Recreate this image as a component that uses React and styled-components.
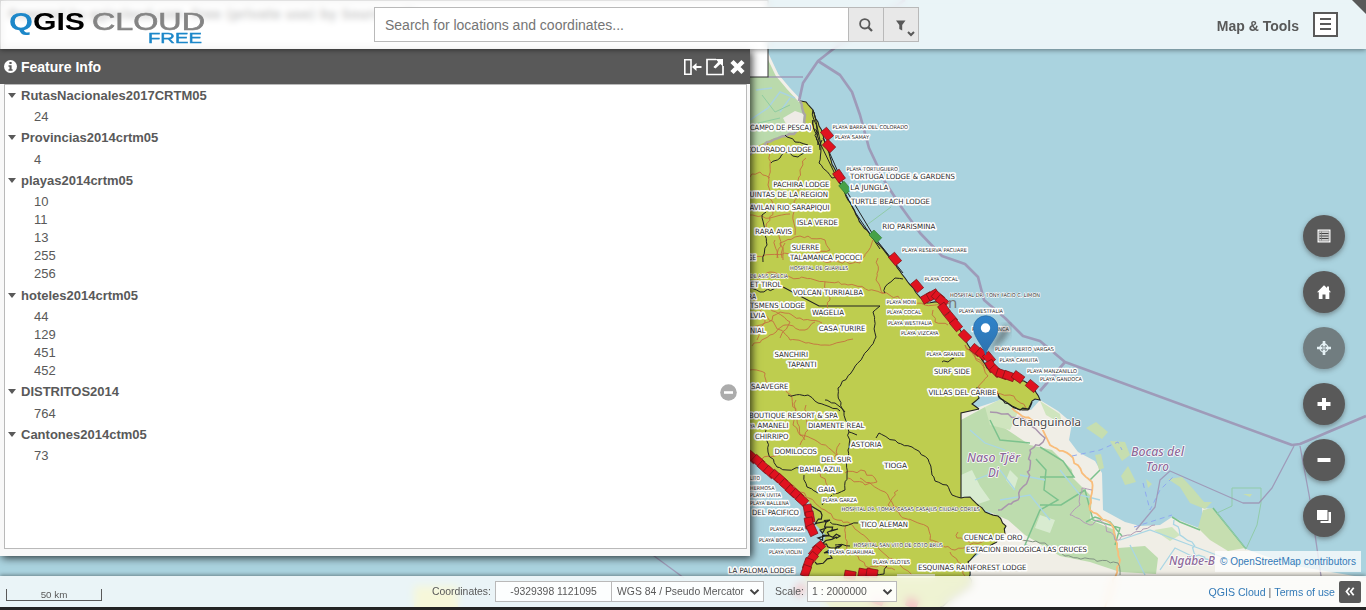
import React from 'react';
import styled, { createGlobalStyle } from 'styled-components';

const Global = createGlobalStyle`
  * { box-sizing: border-box; }
  body { margin: 0; overflow: hidden; background: #262626; font-family: "Liberation Sans", Arial, sans-serif; color: #595959; }
`;

const Screen = styled.div`
  position: relative;
  width: 1366px;
  height: 610px;
  overflow: hidden;
  display: flex;
  flex-direction: column;
  background: #262626;
`;
const MapCanvas = styled.svg`
  position: absolute;
  inset: 0 0 3px 0;
  width: 1366px;
  height: 607px;
  display: block;
`;
const Header = styled.header`
  position: relative;
  z-index: 3;
  height: 49px;
  flex: none;
  display: flex;
  align-items: center;
  background: rgba(255, 255, 255, 0.75);
  backdrop-filter: blur(3px);
  box-shadow: 0 1px 5px rgba(0, 0, 0, 0.45);
`;
const Logo = styled.svg`
  width: 374px;
  height: 49px;
  flex: none;
`;
const SearchBox = styled.div`
  display: flex;
  width: 545px;
  height: 35px;
  border: 1px solid #b9b9b9;
  background: #fff;
`;
const SearchText = styled.div`
  flex: 1;
  padding-left: 10px;
  font-size: 14px;
  line-height: 35px;
  color: #757575;
`;
const SearchButton = styled.div`
  width: 35px;
  border-left: 1px solid #b9b9b9;
  background: #e8e8e8;
  display: flex;
  align-items: center;
  justify-content: center;
`;
const MenuArea = styled.div`
  margin-left: auto;
  margin-right: 28px;
  display: flex;
  align-items: center;
  gap: 14px;
  font-size: 14px;
  font-weight: bold;
  padding-top: 3px;
`;
const MenuButton = styled.div`
  width: 25px;
  height: 25px;
  border: 2px solid #595959;
  background: #fff;
  display: flex;
  flex-direction: column;
  align-items: center;
  justify-content: center;
  gap: 3px;
  margin-top: -4px;
`;
const MenuBar = styled.i`
  width: 11px;
  height: 2px;
  background: #595959;
`;
const Corner = styled.i`
  position: absolute;
  top: 0;
  right: 0;
  border-top: 14px solid #595959;
  border-left: 14px solid transparent;
`;
const Main = styled.main`
  position: relative;
  z-index: 2;
  height: 527px;
  flex: none;
  display: flex;
  justify-content: space-between;
  align-items: flex-start;
`;
const InfoWindow = styled.section`
  width: 750px;
  height: 507px;
  background: #f8f8f8;
  box-shadow: 2px 2px 8px rgba(0, 0, 0, 0.75);
  display: flex;
  flex-direction: column;
  padding-bottom: 7px;
`;
const TitleBar = styled.div`
  height: 35px;
  flex: none;
  display: flex;
  align-items: center;
  gap: 4px;
  padding: 0 3px 0 4px;
  background: #595959;
  color: #fff;
  font-size: 14px;
  font-weight: bold;
`;
const TitleTools = styled.div`
  margin-left: auto;
  display: flex;
  align-items: center;
  gap: 4px;
`;
const Tree = styled.div`
  position: relative;
  flex: 1;
  margin: 0 3px 0 4px;
  padding-top: 1px;
  border: 1px solid #b9b9b9;
  background: #fff;
  font-size: 13px;
`;
const Group = styled.div`
  padding-bottom: 2.7px;
`;
const GroupTitle = styled.div`
  display: flex;
  align-items: center;
  height: 18px;
  margin-bottom: 4px;
  font-weight: bold;
  gap: 5px;
  padding-left: 3px;
`;
const Arrow = styled.i`
  border: 4px solid transparent;
  border-top: 5px solid #595959;
  border-bottom: 0;
`;
const Feature = styled.div`
  height: 18px;
  line-height: 18px;
  padding-left: 29px;
`;
const RemoveBadge = styled.svg`
  position: absolute;
  right: 9px;
  top: 299px;
`;
const Side = styled.aside`
  height: 527px;
  display: flex;
  flex-direction: column;
  align-items: flex-end;
  padding-top: 166px;
`;
const Tools = styled.div`
  display: flex;
  flex-direction: column;
  gap: 14px;
  padding-right: 21px;
`;
const RoundButton = styled.div`
  width: 42px;
  height: 42px;
  border-radius: 50%;
  background: #595959;
  opacity: ${(p) => (p.$off ? 0.7 : 1)};
  box-shadow: 0 2px 5px rgba(60, 60, 60, 0.5);
  display: flex;
  align-items: center;
  justify-content: center;
`;
const Attribution = styled.div`
  margin: auto 5px 4px 0;
  width: 146px;
  height: 21px;
  line-height: 21px;
  text-align: center;
  white-space: nowrap;
  font-size: 10px;
  color: #337ab7;
  background: rgba(255, 255, 255, 0.75);
`;
const Footer = styled.footer`
  position: relative;
  z-index: 3;
  height: 31px;
  flex: none;
  display: flex;
  align-items: center;
  font-size: 10.4px;
  background: rgba(255, 255, 255, 0.75);
  backdrop-filter: blur(4px);
  box-shadow: 0 -1px 4px rgba(0, 0, 0, 0.4);
`;
const ScaleBar = styled.div`
  width: 96px;
  height: 12px;
  margin: 7px 0 0 6px;
  border: 1px solid #595959;
  border-top: 0;
  font-size: 9.8px;
  line-height: 12px;
  text-align: center;
`;
const FooterFields = styled.div`
  display: flex;
  align-items: center;
  margin-left: 330px;
`;
const FieldLabel = styled.span`
  width: ${(p) => p.$w}px;
  margin-left: ${(p) => p.$gap || 0}px;
`;
const Field = styled.div`
  width: ${(p) => p.$w}px;
  height: 21px;
  border: 1px solid #b9b9b9;
  margin-left: ${(p) => (p.$joined ? -1 : 0)}px;
  background: rgba(255, 255, 255, 0.85);
  display: flex;
  align-items: center;
  justify-content: ${(p) => (p.$center ? 'center' : 'space-between')};
  padding: 0 3px 0 ${(p) => (p.$center ? 3 : p.$pad || 5)}px;
  white-space: nowrap;
  font-size: ${(p) => p.$size || 10.4}px;
`;
const Links = styled.div`
  margin-left: auto;
  margin-right: 5px;
  display: flex;
  align-items: center;
  gap: 3px;
  font-size: 10.6px;
`;
const Link = styled.span`
  color: #337ab7;
`;
const Collapse = styled.div`
  width: 22px;
  height: 22px;
  margin-left: 1px;
  border-radius: 2px;
  background: #595959;
  display: flex;
  align-items: center;
  justify-content: center;
`;

const GROUPS = [
  ['RutasNacionales2017CRTM05', ['24']],
  ['Provincias2014crtm05', ['4']],
  ['playas2014crtm05', ['10', '11', '13', '255', '256']],
  ['hoteles2014crtm05', ['44', '129', '451', '452']],
  ['DISTRITOS2014', ['764']],
  ['Cantones2014ctm05', ['73']],
];

// [text, left, right, baseline]
const HOTELS = [
  ['CAMPO DE PESCA)', 750, 811.5, 129.7], ['COLORADO LODGE', 746, 812, 152.3], ['PACHIRA LODGE', 773.3, 829.5, 187],
  ['QUINTAS DE LA REGION', 744, 828, 197], ['GAVILAN RIO SARAPIQUI', 744, 829.5, 210.3], ['ISLA VERDE', 797, 838, 225.3],
  ['RARA AVIS', 755, 792, 233.7], ['SUERRE', 791.7, 819.5, 250], ['TALAMANCA POCOCI', 790, 862, 260],
  ['TORTUGA LODGE & GARDENS', 850, 955, 179], ['LA JUNGLA', 850.3, 888.3, 190], ['TURTLE BEACH LODGE', 851, 930, 204.3],
  ['RIO PARISMINA', 882.3, 935.3, 229], ['ET TIROL', 750, 781.5, 287], ['VOLCAN TURRIALBA', 793, 863, 295],
  ['TSMENS LODGE', 750, 805, 308.3], ['WAGELIA', 812, 844, 315], ['LVIA', 750, 765.5, 318], ['CASA TURIRE', 818.7, 865.5, 330.5],
  ['NIAL', 750, 765.5, 333], ['SANCHIRI', 774.5, 808, 357], ['TAPANTI', 787.5, 816.5, 367], ['SAAVEGRE', 751, 788.5, 388.5],
  ['SURF SIDE', 934, 970, 373.5], ['VILLAS DEL CARIBE', 928.5, 996.5, 394.5], ['BOUTIQUE RESORT & SPA', 749, 837.7, 417.5],
  ['AMANELI', 757.5, 788.5, 428], ['CHIRRIPO', 755, 788.5, 439], ['DIAMENTE REAL', 808, 864.5, 427.7],
  ['DOMILOCOS', 774.5, 817, 453.7], ['ASTORIA', 851, 881.5, 447], ['DEL SUR', 821, 851.5, 462], ['BAHIA AZUL', 799.5, 842, 472],
  ['TIOGA', 884, 907, 468], ['GAIA', 818, 835, 492], ['TICO ALEMAN', 860.5, 908, 527], ['CUENCA DE ORO', 964, 1022.5, 540],
  ['ESTACION BIOLOGICA LAS CRUCES', 966, 1087, 552], ['ESQUINAS RAINFOREST LODGE', 918, 1026.5, 570],
  ['DEL PACIFICO', 752, 799, 515], ['LA PALOMA LODGE', 728.5, 794.5, 572.5], ['GE', 748, 756, 260], ['RA', 748, 756, 299],
];
const BEACHES = [
  ['PLAYA BARRA DEL COLORADO', 832.5, 908, 128.5], ['PLAYA SAMAY', 835, 869, 138.7], ['PLAYA TORTUGUERO', 846.5, 898, 170.5],
  ['PLAYA RESERVA PACUARE', 902, 967, 252.3], ['PLAYA COCAL', 924.5, 958, 281.3], ['PLAYA MOIN', 886.5, 916, 304],
  ['PLAYA COCAL', 887, 921, 314.3], ['PLAYA WESTFALIA', 888, 932, 324.7], ['PLAYA VIZCAYA', 901, 938.5, 335],
  ['PLAYA WESTFALIA', 959, 1003, 312.7], ['PLAYA BLANCA', 972, 1009, 330.5], ['PLAYA GRANDE', 926.5, 964.5, 355.7],
  ['PLAYA PUERTO VARGAS', 995, 1054, 351], ['PLAYA CAHUITA', 999.5, 1038, 362.3], ['PLAYA MANZANILLO', 1027, 1077, 373],
  ['PLAYA GANDOCA', 1040, 1082, 380.7], ['PLAYA GARZA', 822.5, 857, 502], ['PLAYA GUARUMAL', 829.5, 874.5, 554],
  ['PLAYA ISLOTES', 873, 910, 564.3], ['LITO', 750, 760, 480], ['HERMOSA', 750, 774.5, 490], ['PLAYA UVITA', 750, 781, 497],
  ['PLAYA BALLENA', 750, 789, 504.5], ['PLAYA GARZA', 770, 804, 531], ['PLAYA BOCACHICA', 759, 805.5, 542],
  ['PLAYA VIOLIN', 769, 802, 553.5], ['YA', 750, 755, 427.5],
];
const HOSPITALS = [
  ['HOSPITAL DE GUAPILES', 790, 848.5, 270], ['DE ASIS GRECIA', 750, 788, 278], ['HOSPITAL DR. TONY FACIO C. LIMON', 950, 1040, 296.5],
  ['HOSPITAL DR. TOMAS CASAS CASAJUS CIUDAD CORTES', 841.5, 980, 510.7], ['HOSPITAL SAN VITO DE COTO BRUS', 853.5, 943, 546.5],
];
const MARKS = [
  [827, 134, 50], [829, 146, 45], [839, 176, 55], [895, 259, 50], [917, 286, 50], [927, 298, -30], [933, 295, -30], [938, 297, 40],
  [942, 301, 40], [944, 309, 55], [951, 318, 50], [956, 325, 50], [965, 336, 45], [976, 350, 40], [982, 354, 40], [989, 358, 50],
  [991, 366, 60], [996, 371, 45], [1002, 374, 20], [1009, 376, 20], [1018, 377, 35], [1032, 386, 40],
  [752, 457, 42], [758, 461, 42], [764, 467, 42], [770, 472, 42], [776, 476, 42], [781, 480, 42], [786, 485, 42], [792, 491, 42],
  [797, 495, 42], [802, 500, 42], [808, 510, 80], [810, 517, 80], [809, 523, 80], [812, 530, 65], [819, 547, -40], [815, 552, -50],
  [812, 558, -50], [808, 564, -70], [806, 571, -70], [850, 575, 10], [864, 573, 10], [872, 573, 10], [878, 600, 20], [912, 603, 20], [800, 590, -60],
];

// Breaks every segment into small uneven steps, like a surveyed border.
function rough(points, amp = 1.6, seed = 3) {
  let s = seed;
  const rnd = () => {
    s = (s * 16807) % 2147483647;
    return (s / 2147483647) * 2 - 1;
  };
  let d = `M${points[0][0]} ${points[0][1]}`;
  for (let i = 1; i < points.length; i += 1) {
    const [ax, ay] = points[i - 1];
    const [bx, by] = points[i];
    const n = Math.max(1, Math.round(Math.hypot(bx - ax, by - ay) / 4));
    for (let k = 1; k < n; k += 1) {
      const t = k / n;
      d += `L${(ax + (bx - ax) * t + rnd() * amp).toFixed(1)} ${(ay + (by - ay) * t + rnd() * amp).toFixed(1)}`;
    }
    d += `L${bx} ${by}`;
  }
  return d;
}

const ROADS = [
  [[768, 143], [770, 165], [768, 185], [773, 210], [766, 228], [780, 233], [782, 258]],
  [[750, 177], [760, 172], [770, 178]], [[806, 158], [800, 170], [798, 190], [793, 215], [795, 235]],
  [[750, 215], [770, 218], [790, 214]], [[778, 258], [780, 243], [800, 236], [825, 240], [830, 250], [815, 253]],
  [[750, 257], [790, 254], [830, 262], [860, 263], [873, 240]], [[878, 258], [876, 280], [882, 293], [925, 305], [950, 303]],
  [[750, 285], [770, 272], [790, 277], [815, 280], [845, 284], [885, 293]], [[825, 282], [830, 300], [825, 312]],
  [[750, 330], [765, 323], [780, 312], [800, 318], [822, 323]], [[752, 346], [770, 335], [785, 325], [805, 330], [815, 322]],
  [[760, 310], [775, 325], [790, 340], [825, 345], [853, 339]], [[755, 300], [765, 318], [757, 340]], [[770, 308], [790, 322], [780, 338]],
  [[933, 310], [935, 322], [948, 325]], [[965, 345], [980, 360], [988, 376], [978, 387], [985, 392], [1010, 395], [1026, 408]],
  [[965, 345], [975, 357], [985, 368]], [[750, 370], [765, 373], [768, 388]], [[786, 390], [792, 398], [797, 420], [800, 435], [815, 440], [838, 455]],
  [[796, 400], [793, 425], [805, 440]], [[806, 405], [808, 430], [800, 445]], [[840, 443], [833, 463]], [[820, 472], [828, 487]],
  [[780, 475], [800, 492], [825, 510], [837, 520], [848, 522], [870, 542], [900, 565], [912, 575]],
  [[845, 473], [865, 471], [877, 482], [865, 485], [848, 478]], [[860, 478], [885, 492], [900, 515], [928, 527], [930, 540], [955, 550], [985, 540]],
  [[898, 490], [888, 505], [905, 512]], [[950, 552], [962, 565], [965, 576]], [[958, 532], [957, 538], [970, 542]], [[846, 525], [847, 550], [870, 568]],
  [[752, 460], [775, 456], [800, 452]], [[860, 570], [880, 565], [895, 570]], [[775, 240], [777, 258]], [[785, 243], [783, 260]],
];
const BORDERS = [
  [[750, 288], [760, 292], [783, 287]], [[763, 262], [767, 245], [762, 215], [766, 212]], [[785, 135], [795, 142], [808, 145]],
  [[771, 163], [780, 158], [785, 152], [798, 157], [804, 153]], [[822, 140], [819, 163], [832, 178], [838, 178]],
  [[885, 293], [885, 287], [895, 278], [903, 279]], [[880, 306], [873, 312], [876, 337], [868, 350], [853, 370], [838, 388], [838, 395], [844, 412], [849, 432], [857, 435]],
  [[788, 395], [808, 395], [818, 403], [840, 411]], [[825, 400], [835, 403], [845, 412]],
  [[876, 438], [879, 433], [898, 443], [912, 447], [928, 459], [932, 475], [935, 481], [947, 485], [952, 495], [961, 498]],
  [[849, 432], [848, 450], [847, 475], [845, 490], [833, 494]], [[766, 430], [768, 452], [777, 467], [787, 470], [800, 468]],
  [[804, 475], [807, 487], [818, 493]], [[822, 505], [832, 495]], [[830, 522], [845, 526], [858, 523]], [[942, 362], [948, 362], [954, 358]],
  [[887, 566], [884, 574], [875, 575]], [[835, 545], [850, 546]],
];
const LAND = [
  [800, 101], [806, 102], [813, 110], [818, 122], [823, 134], [831, 160], [838, 178], [848, 200], [862, 225], [877, 243], [890, 258],
  [905, 278], [918, 295], [927, 303], [938, 302], [946, 309], [955, 322], [962, 333], [970, 348], [980, 356], [987, 368], [999, 376],
  [1012, 378], [1024, 381], [1034, 388], [1040, 400], [1035, 399], [1032, 401], [1028, 410], [1018, 409], [1010, 405], [1001, 399],
  [997, 392], [977, 388], [979, 398], [972, 404], [979, 409],
];
const SOUTH = [[961, 498], [970, 497], [979, 506], [990, 514], [998, 516], [1006, 526], [1005, 534], [993, 544], [979, 551], [968, 562], [971, 585], [940, 607]];

function Label({ item, size, halo = 2.4, color = '#2b2b2b' }) {
  const [text, left, right, y] = item;
  return (
    <text x={left} y={y} fontSize={size} textLength={right - left} lengthAdjust="spacingAndGlyphs" fill={color} stroke="#fff" strokeWidth={halo} strokeLinejoin="round" paintOrder="stroke">
      {text}
    </text>
  );
}

function CountryMap() {
  const land = `${rough(LAND, 0.7)}L961 413L961 498${rough(SOUTH, 1).replace('M', 'L')}L830 607L815 590L803 576L812 562L822 546L826 535L816 525L812 505L803 496L790 484L775 471L750 452L740 150L755 147L772 139L790 135L803 128L805 117Z`;
  return (
    <MapCanvas viewBox="0 0 1366 607" fontFamily='"DejaVu Sans", sans-serif'>
      <defs>
        <linearGradient id="pin" x1="0" y1="0" x2="0" y2="1">
          <stop offset="0" stopColor="#2e84cb" />
          <stop offset="1" stopColor="#2f72ae" />
        </linearGradient>
        <filter id="soft"><feGaussianBlur stdDeviation="3" /></filter>
      </defs>
      <rect width="1366" height="607" fill="#aad3df" />
      <path d="M740 40H764L770 60L777 75L786 87L800 101L805 117L803 128L790 135L770 140L740 160Z" fill="#badaac" />
      <path d="M766 52L777 75L788 88L800 101" fill="none" stroke="#f2efe9" strokeWidth="3" />
      <path d="M783 118L795 111L804 114L802 127L790 132Z" fill="#eeebe6" />
      <path d="M750 120L768 108L780 92L795 98M756 90L772 88M780 112L790 98" fill="none" stroke="#aad3df" strokeWidth="1.5" />
      <path d="M762 95L775 112L790 105M750 125L780 118" fill="none" stroke="#8fcca0" />

      <path d="M961 413L1000 400L1031 410L1040 400L1058 411L1072 423L1069 440L1078 452L1095 461L1102 473L1103 510L1125 522L1140 526L1160 525L1172 517L1186 523L1199 528L1203 521L1202 508L1212 509L1224 526L1246 549L1290 565L1366 578V607H940L971 576L968 562L993 544L1006 528L990 512L961 498Z" fill="#f0eee6" />
      <path d="M961 420L985 407L1000 425L1030 445L1052 450L1072 470L1073 478L1092 497L1090 520L1115 530L1118 548L1145 546L1158 558L1156 574L1120 572L1090 562L1060 556L1025 535L1008 520L985 510L961 498Z" fill="#bddcae" />
      <path d="M985 407L1003 398L1018 412L1010 430L990 425ZM1040 401L1060 414L1062 424L1046 415ZM1154 530L1172 527L1180 535L1170 541Z" fill="#cfe5be" />
      <path d="M961 475L972 470L980 486L990 500L975 505L961 498ZM1040 515L1055 520L1050 533L1035 528ZM1010 470L1018 478L1014 490L1006 480Z" fill="#d8ebd0" />
      <path d="M1198 528L1203 510L1212 508L1245 548L1228 551L1210 540ZM1168 479L1182 477L1194 490L1204 502L1212 502L1205 509L1190 503L1180 487ZM1086 428L1096 422L1108 432L1102 439ZM1110 441L1125 442L1130 455L1122 461ZM1121 476L1128 466L1136 482L1125 485ZM1146 479L1152 484L1148 488ZM1095 455L1101 454L1104 468L1099 470ZM1243 494L1252 494L1250 497Z" fill="#c6deb0" />
      <path d="M1040 447L1063 461L1074 477L1040 477M1040 505L1061 505L1085 490L1093 520L1120 528L1115 545M1036 459L1046 470L1044 490L1058 500L1040 510L1025 545L1045 550M990 420L1000 440L1030 443M1100 470L1090 480M1086 522L1095 517L1110 522L1122 536M1172 517L1180 522L1200 530M1213 508L1246 549" fill="none" stroke="#7cc28d" strokeWidth="1.5" />
      <path d="M970 430L985 443L1005 450M975 480L1000 470L1015 490M1000 500L1030 495L1050 520M1060 470L1080 495L1100 500M1120 540L1150 530L1190 545L1230 560M1160 570L1175 548L1200 560M1130 545L1145 575M1020 475L1045 480" fill="none" stroke="#a9d6e4" strokeWidth="1.3" />
      <path d={rough([[1174, 520], [1180, 535], [1192, 542], [1196, 556], [1210, 560]], 2, 5)} fill="none" stroke="#a9d6e4" strokeWidth="1.3" />
      <path d={rough([[1012, 408], [1022, 416], [1040, 422], [1050, 445], [1070, 455], [1082, 473], [1092, 482], [1090, 510], [1112, 525], [1120, 560], [1105, 607]], 1)} fill="none" stroke="#f9bd7b" strokeWidth="1.8" />
      <path d={rough([[990, 412], [1005, 414], [1025, 420], [1045, 438], [1043, 442], [1030, 450], [1028, 480], [1020, 490], [1018, 500], [998, 510]], 1.5)} fill="none" stroke="#a995ad" strokeWidth="1.5" />
      <path d={rough([[1020, 540], [1045, 543], [1065, 556], [1118, 563], [1120, 575]], 1)} fill="none" stroke="#829383" />
      <path d={rough([[1092, 490], [1082, 488], [1080, 505], [1070, 515], [1090, 525], [1100, 520], [1115, 540], [1155, 525]], 1.5)} fill="none" stroke="#b39cb5" />
      <path d="M1072 456L1100 450L1118 442L1122 450M1143 483L1150 510L1160 490L1175 475M1134 527L1172 515" fill="none" stroke="#8fa9f0" strokeDasharray="5 4" />
      <path d="M1232 488H1261V503L1257 525L1246 549L1217 513L1232 506Z" fill="none" stroke="#91cba9" />

      <g fill="none" stroke="#9d92b3" strokeLinejoin="round" opacity=".85">
        <path d="M905 0L832 50L818 61L803 83L799 101M818 61L840 75L852 92L860 115L869 148L885 182L902 208L920 233L942 256L965 264L978 277L984 300L1005 318L1023 336L1040 341L1065 362L1292 445L1300 444L1366 416M1065 362L1040 391" strokeWidth="2.7" />
        <path d="M768 77H803M1294 446L1272 488L1259 503L1243 503L1170 471L1160 480L1155 507L1136 530M1300 446L1310 500L1321 576M650 553L684 578" strokeWidth="1.3" />
      </g>
      <path d="M864 227L891 207" stroke="#91cba9" />

      <path d={land} fill="#becd4f" />
      <path d={rough(LAND, 0.8)} fill="none" stroke="#222" strokeWidth="1.1" />
      <path d="M979 409L961 413V498" fill="none" stroke="#222" strokeWidth="1.1" />
      <path d={rough(SOUTH, 1.2)} fill="none" stroke="#222" strokeWidth="1.1" />
      <path d={rough([[750, 155], [760, 147], [775, 139], [794, 134], [803, 128], [805, 115], [800, 101]], 1)} fill="none" stroke="#aaa5a5" strokeWidth="2.4" />
      <path d="M814 112L821 145L834 172L855 212L880 249M823 138L846 190L875 238L903 273" fill="none" stroke="#222" strokeWidth="1" />
      <path d="M783 287L819 306H880" fill="none" stroke="#222" strokeWidth="1.1" />
      {ROADS.map((p, i) => <path key={i} d={rough(p, 1.5, i + 7)} fill="none" stroke="#c4703f" strokeWidth=".9" />)}
      {BORDERS.map((p, i) => <path key={i} d={rough(p, 1.2, i + 31)} fill="none" stroke="#222" strokeWidth="1" />)}
      <path d={rough([[812, 507], [822, 515], [815, 524], [830, 520], [820, 530], [838, 529], [818, 538], [840, 536], [822, 544], [842, 545], [824, 553], [832, 558], [815, 562]], 3.4, 99)} fill="none" stroke="#222" strokeWidth="1.2" />
      <path d={rough([[813, 110], [817, 130], [818, 145], [813, 120], [820, 150]], 1.5, 12)} fill="none" stroke="#222" />
      <path d={rough([[997, 391], [1003, 400], [1012, 406], [1020, 410], [1029, 409], [1032, 402]], 2, 8)} fill="none" stroke="#222" strokeWidth="1.2" />

      {MARKS.map(([x, y, a]) => <rect key={`${x}-${y}`} x={x - 5.5} y={y - 4} width="11" height="8" transform={`rotate(${a} ${x} ${y})`} fill="#e0121f" stroke="#7d1418" strokeWidth=".7" />)}
      <rect x="840" y="184" width="11" height="7" transform="rotate(50 845 187)" fill="#46a147" stroke="#2d7a30" strokeWidth=".6" />
      <rect x="870" y="232.500" width="11" height="7" transform="rotate(45 875 236)" fill="#46a147" stroke="#2d7a30" strokeWidth=".6" />
      <text x="948" y="308" fontSize="15" fontFamily='"Noto Sans"' fill="#777">n</text>

      <g fontFamily='"Noto Sans", sans-serif'>
        <Label item={['Changuinola', 1012, 1081, 425.5]} size={11.5} halo={1.5} color="#444" />
        <g fontStyle="italic" fontWeight="500">
          <Label item={['Naso Tjër', 967, 1020, 462]} size={12.5} halo={1.5} color="#8d6a99" />
          <Label item={['Di', 988, 999, 477]} size={12.5} halo={1.5} color="#8d6a99" />
          <Label item={['Bocas del', 1131, 1184, 455.5]} size={12} halo={1.5} color="#8d6a99" />
          <Label item={['Toro', 1146, 1169, 471]} size={12} halo={1.5} color="#8d6a99" />
          <Label item={['Ngäbe-B', 1169, 1215, 565]} size={12} halo={1.5} color="#8d6a99" />
        </g>
      </g>

      {HOSPITALS.map((t) => <Label key={t[0]} item={t} size={5.3} halo={1.3} />)}
      {HOTELS.map((t) => <Label key={t[0]} item={t} size={7.2} halo={3.2} />)}
      {BEACHES.map((t) => <Label key={t[0] + t[3]} item={t} size={5.3} halo={2.6} />)}

      <path d="M988 352L1004 327Q1012 322 1008 332Q1004 342 988 352" fill="#333" opacity=".6" filter="url(#soft)" />
      <path d="M985.500 355C984 346 973.500 338 973.500 328A12.200 12.200 0 0 1 998 328C998 338 987 346 985.500 355Z" fill="url(#pin)" stroke="#2b6da8" strokeWidth=".8" />
      <circle cx="985.500" cy="328" r="4.700" fill="#fff" />

      <rect x="0.500" y="0.500" width="767.500" height="76.500" fill="#fff" stroke="#333" />
      <g fontSize="14" fontWeight="bold" fill="#333">
        <text x="8" y="19" textLength="176" lengthAdjust="spacingAndGlyphs">Powered by qgiscloud.com</text>
        <text x="191" y="19" textLength="228" lengthAdjust="spacingAndGlyphs">Free (private use) by Sourcepole</text>
      </g>
      <rect x="414" y="586" width="44" height="30" fill="#dbe06a" />
      <rect x="897" y="574" width="38" height="4" fill="#fff" opacity=".7" />
    </MapCanvas>
  );
}

const Chevron = () => (
  <svg width="11" height="8" viewBox="0 0 11 8"><path d="M1.500 1.800L5.500 5.700L9.500 1.800" fill="none" stroke="#444" strokeWidth="2" /></svg>
);

function BrandLogo() {
  return (
    <Logo viewBox="0 0 374 49" fontFamily='"Liberation Sans", sans-serif' fontSize="23">
      <text x="9" y="29.500" textLength="24" lengthAdjust="spacingAndGlyphs" fill="#1c87c9" fontWeight="bold">Q</text>
      <text x="33" y="29.500" textLength="52" lengthAdjust="spacingAndGlyphs" fill="#000" fontWeight="bold">GIS</text>
      <text x="92" y="29.500" textLength="113" lengthAdjust="spacingAndGlyphs" fill="#848484" stroke="#848484" strokeWidth=".6">CLOUD</text>
      <text x="148" y="43" fontSize="14" textLength="54" lengthAdjust="spacingAndGlyphs" fill="#1c87c9" stroke="#1c87c9" strokeWidth=".4">FREE</text>
    </Logo>
  );
}

const TOOL_ICONS = [
  <g key="l"><path d="M.5.500H13.500V13.500H.5Z" fill="#fff" /><path d="M2 2H12V12H2Z" fill="#ccc" stroke="#8a8a8a" strokeWidth=".7" /><path d="M2.500 4.500H11.500M2.500 7H11.500M2.500 9.500H11.500" stroke="#444" /><path d="M4.500 2.500V11.500" stroke="#777" strokeWidth=".7" /></g>,
  <path key="h" d="M7 .3L10 3V1.500H12V5L14 7.300H12.300V14H8.500V9.500H5.500V14H1.800V7.300H0Z" fill="#fff" />,
  <g key="t" fill="none" stroke="#fff"><circle cx="7" cy="7" r="4" strokeWidth="1.300" /><path d="M7 0V5.500M7 8.500V14M0 7H5.500M8.500 7H14" strokeWidth="2.600" /><circle cx="7" cy="7" r=".6" /></g>,
  <path key="p" d="M5 1H9V5H13.500V9H9V13H5V9H.5V5H5Z" fill="#fff" />,
  <path key="m" d="M.5 5H13.500V9H.5Z" fill="#fff" />,
  <path key="b" d="M0 1H10.500V11H0ZM11.500 3H14V14H3.500V12H11.500Z" fill="#fff" />,
];

export default function App() {
  return (
    <Screen>
      <Global />
      <CountryMap />
      <Header>
        <BrandLogo />
        <SearchBox>
          <SearchText>Search for locations and coordinates...</SearchText>
          <SearchButton>
            <svg width="14" height="14" viewBox="0 0 14 14"><g fill="none" stroke="#595959" strokeWidth="1.800"><circle cx="5.800" cy="5.800" r="4.700" /><path d="M9 9L13 13" strokeWidth="2.300" /></g></svg>
          </SearchButton>
          <SearchButton>
            <svg width="28" height="24" viewBox="-1 0 28 24"><path d="M8 7.500H17.500L14.200 12V17.500L11.300 16V12Z" fill="#595959" /><path d="M20 19L23 22L26 19" fill="none" stroke="#595959" strokeWidth="2" /></svg>
          </SearchButton>
        </SearchBox>
        <MenuArea>
          Map &amp; Tools
          <MenuButton><MenuBar /><MenuBar /><MenuBar /></MenuButton>
        </MenuArea>
        <Corner />
      </Header>
      <Main>
        <InfoWindow>
          <TitleBar>
            <svg width="13" height="13" viewBox="0 0 13 13"><circle cx="6.500" cy="6.500" r="6.500" fill="#fff" /><path d="M5.400 2H7.600V4H5.400ZM4.500 5.300H7.600V9.300H8.600V10.800H4.500V9.300H5.500V6.700H4.500Z" fill="#595959" /></svg>
            Feature Info
            <TitleTools>
              <svg width="19" height="18" viewBox="0 0 19 18"><path d="M1.800 1.800H8V16.200H1.800Z" fill="none" stroke="#fff" strokeWidth="1.600" /><path d="M9 9L13.500 5V7.900H18.500V10.100H13.500V13Z" fill="#fff" /></svg>
              <svg width="18" height="18" viewBox="0 0 18 18"><path d="M10 1.500H1V16.500H17V8M8 9.500L14 3.500" fill="none" stroke="#fff" strokeWidth="1.700" /><path d="M9.500 1H17V8.500L14.300 6L9.500 10.500L8 9L12.200 4Z" fill="#fff" /></svg>
              <svg width="19" height="18" viewBox="0 0 19 18"><path d="M4 3.500L15 14.500M15 3.500L4 14.500" stroke="#fff" strokeWidth="4.500" /></svg>
            </TitleTools>
          </TitleBar>
          <Tree>
            {GROUPS.map(([name, items]) => (
              <Group key={name}>
                <GroupTitle><Arrow />{name}</GroupTitle>
                {items.map((v) => <Feature key={v}>{v}</Feature>)}
              </Group>
            ))}
            <RemoveBadge width="17" height="17" viewBox="0 0 17 17"><circle cx="8.500" cy="8.500" r="8.300" fill="#acacac" /><path d="M4 7.200H13V9.800H4Z" fill="#fff" /></RemoveBadge>
          </Tree>
        </InfoWindow>
        <Side>
          <Tools>
            {TOOL_ICONS.map((icon, i) => (
              <RoundButton key={i} $off={i === 2}><svg width="14" height="14" viewBox="0 0 14 14">{icon}</svg></RoundButton>
            ))}
          </Tools>
          <Attribution>© OpenStreetMap contributors</Attribution>
        </Side>
      </Main>
      <Footer>
        <ScaleBar>50 km</ScaleBar>
        <FooterFields>
          <FieldLabel $w={63}>Coordinates:</FieldLabel>
          <Field $w={117} $center>-9329398 1121095</Field>
          <Field $w={153} $joined>WGS 84 / Pseudo Mercator<Chevron /></Field>
          <FieldLabel $w={32} $gap={11}>Scale:</FieldLabel>
          <Field $w={90} $size={10.4} $pad={4}>1 : 2000000<Chevron /></Field>
        </FooterFields>
        <Links>
          <Link>QGIS Cloud</Link>|<Link>Terms of use</Link>
          <Collapse>
            <svg width="10" height="9" viewBox="0 0 10 9"><path d="M4.500 .8L1.500 4.500L4.500 8.200M8.700 .8L5.700 4.500L8.700 8.200" fill="none" stroke="#fff" strokeWidth="1.800" /></svg>
          </Collapse>
        </Links>
      </Footer>
    </Screen>
  );
}
